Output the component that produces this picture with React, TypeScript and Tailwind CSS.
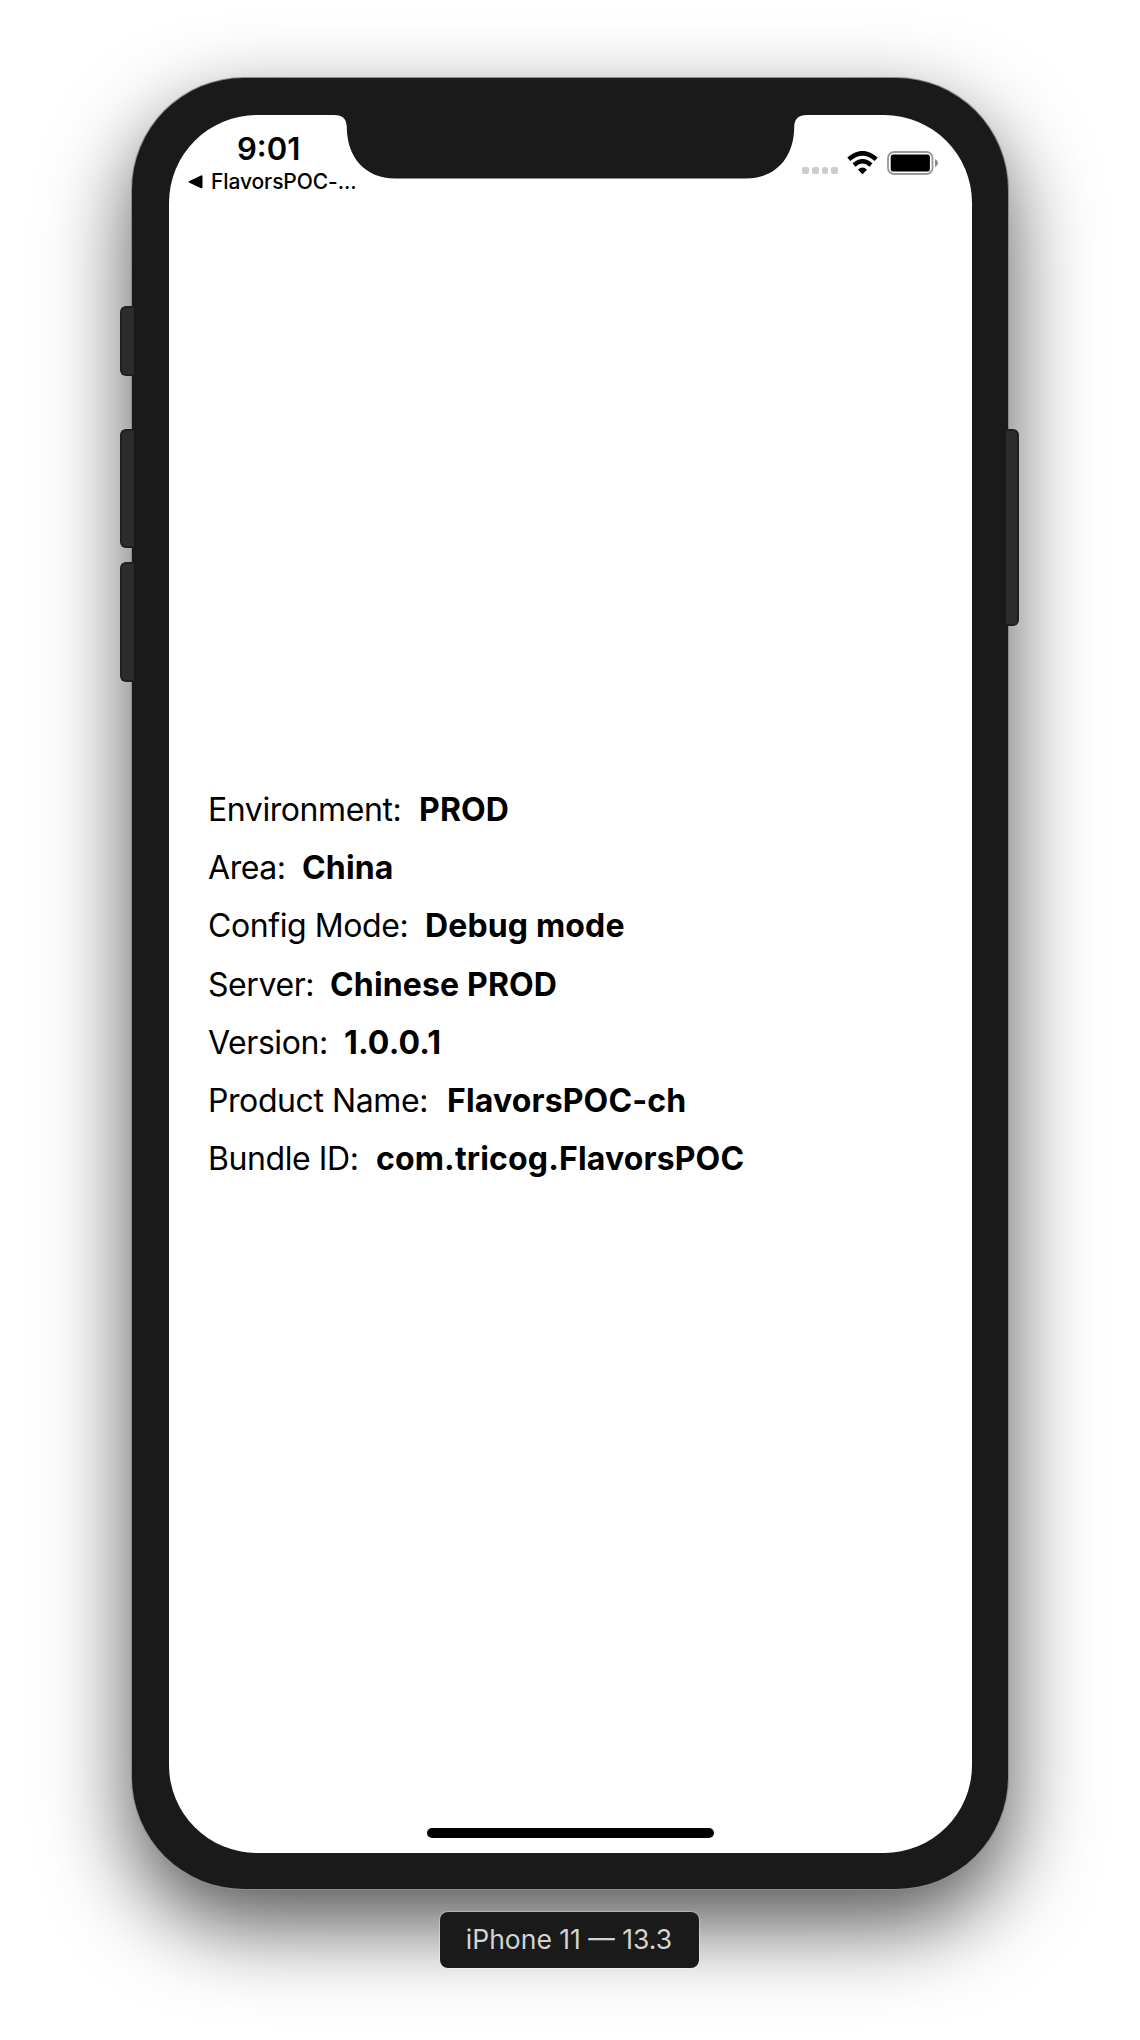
const rows = [
  { label: "Environment:", value: "PROD", width: "w-[211px]" },
  { label: "Area:", value: "China", width: "w-[94px]" },
  { label: "Config Mode:", value: "Debug mode", width: "w-[217px]" },
  { label: "Server:", value: "Chinese PROD", width: "w-[122px]" },
  { label: "Version:", value: "1.0.0.1", width: "w-[136px]" },
  { label: "Product Name:", value: "FlavorsPOC-ch", width: "w-[239px]" },
  { label: "Bundle ID:", value: "com.tricog.FlavorsPOC", width: "w-[168px]" },
];

const sideButton = "absolute border-2 border-[#1f1f1f] bg-[#2c2c2c]";

function StatusBar() {
  return (
    <header className="flex h-[80px] justify-between">
      <div className="flex flex-col pl-[19px] pt-[17px]">
        <time className="pl-[49px] text-[31px] leading-[34px] font-semibold">9:01</time>
        <div className="flex items-center whitespace-nowrap text-[21px] leading-[31px] font-medium tracking-[-0.1px]">
          <svg className="mr-[8px] h-[14px] w-[15px]" viewBox="0 0 15 14">
            <path d="M1 6.2 13 .4Q14.5 0 14.5 1.5V12Q14.5 13.8 13 13.2L1 7.6Q-.2 7 1 6.2Z" />
          </svg>
          FlavorsPOC-...
        </div>
      </div>
      <div className="flex pr-[33px] pt-[36px]">
        <div className="mt-[16px] flex gap-[3px]">
          {[0, 1, 2, 3].map((i) => (
            <span key={i} className="h-[7px] w-[6.7px] rounded-[2px] bg-[#cccccc]" />
          ))}
        </div>
        <svg className="ml-[9px] h-[24px] w-[31px]" viewBox="0 0 31 24" fill="none">
          <path d="M1.8 8.3Q15.5-3.7 29.2 8.3" stroke="#000" strokeWidth="4.6" />
          <path d="M7 14Q15.5 6.6 24 14" stroke="#000" strokeWidth="4.4" />
          <path d="M11 18.8Q15.5 14.4 20 18.8L15.5 23.2Z" fill="#000" />
        </svg>
        <svg className="ml-[9px] h-[24px] w-[52px]" viewBox="0 0 52 24">
          <rect x="1" y="1" width="44.5" height="22" rx="6" fill="none" stroke="#999" strokeWidth="1.8" />
          <rect x="3.7" y="3.5" width="39.2" height="17" rx="2.5" />
          <path d="M48 8Q51 9.3 51 12T48 16Z" fill="#888" />
        </svg>
      </div>
    </header>
  );
}

function Notch() {
  return (
    <svg className="absolute left-[165px] top-[-1px] h-[66px] w-[473px]" viewBox="0 0 473 66" fill="#1a1a1a">
      <path d="M0 0V1C9 1 12.5 5 12.8 13C12.8 43 31 64.5 61 64.5H412C442 64.5 460.2 43 460.2 13C460.5 5 464 1 473 1V0Z" />
    </svg>
  );
}

export default function App() {
  return (
    <main className="flex h-[2040px] w-[1140px] flex-col items-center overflow-hidden bg-white pt-[78px] font-['Inter',sans-serif] text-black">
      <section className="relative flex h-[1811px] w-[876px] shrink-0 rounded-[112px] bg-[#1a1a1a] px-[37px] pt-[37px] pb-[36px] shadow-[0_0_0_1px_#8c8c8c,0_35px_86px_rgba(0,0,0,0.68)]">
        <i className={`${sideButton} left-[-12px] top-[228px] h-[70px] w-[14px] rounded-l-[6px] border-r-0`} />
        <i className={`${sideButton} left-[-12px] top-[351px] h-[119px] w-[14px] rounded-l-[6px] border-r-0`} />
        <i className={`${sideButton} left-[-12px] top-[484px] h-[120px] w-[14px] rounded-l-[6px] border-r-0`} />
        <i className={`${sideButton} right-[-11px] top-[351px] h-[197px] w-[13px] rounded-r-[6px] border-l-0`} />
        <div className="relative flex w-[803px] shrink-0 flex-col rounded-[88px] bg-white">
          <StatusBar />
          <Notch />
          <dl className="mt-[586px] flex flex-col pl-[39px] text-[32px]">
            {rows.map((r) => (
              <div key={r.label} className="flex h-[58.2px] items-center whitespace-nowrap">
                <dt className={`${r.width} shrink-0 tracking-[-0.42px]`}>{r.label}</dt>
                <dd className="font-bold tracking-[0.15px]">{r.value}</dd>
              </div>
            ))}
          </dl>
          <div className="mx-auto mt-auto mb-[15px] h-[10px] w-[287px] rounded-full bg-black" />
        </div>
      </section>
      <footer className="relative mt-[23px] mr-[2px] flex h-[56px] w-[259px] shrink-0 items-center justify-center rounded-[8px] bg-[#1a1a1a] text-[26.5px] text-[#d3d3d3] shadow-[0_0_0_1px_rgba(255,255,255,0.3)]">
        iPhone 11 — 13.3
      </footer>
    </main>
  );
}
